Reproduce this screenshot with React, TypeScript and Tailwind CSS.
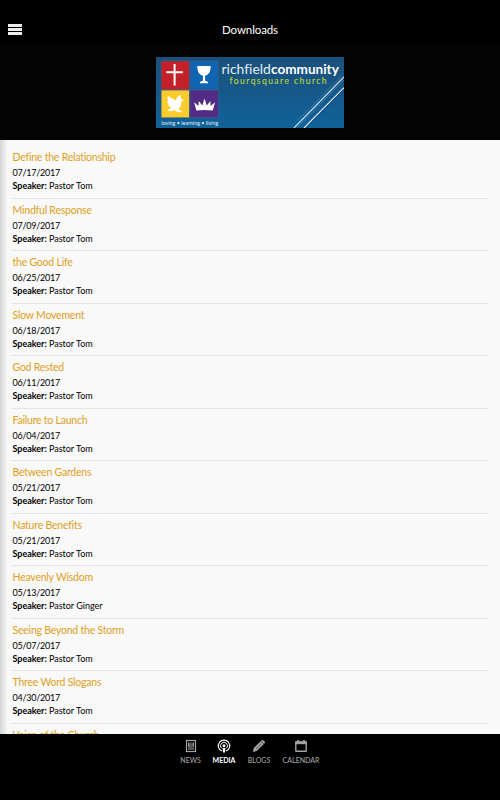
const downloads = [
  { title: "Define the Relationship", date: "07/17/2017", speaker: "Pastor Tom" },
  { title: "Mindful Response", date: "07/09/2017", speaker: "Pastor Tom" },
  { title: "the Good Life", date: "06/25/2017", speaker: "Pastor Tom" },
  { title: "Slow Movement", date: "06/18/2017", speaker: "Pastor Tom" },
  { title: "God Rested", date: "06/11/2017", speaker: "Pastor Tom" },
  { title: "Failure to Launch", date: "06/04/2017", speaker: "Pastor Tom" },
  { title: "Between Gardens", date: "05/21/2017", speaker: "Pastor Tom" },
  { title: "Nature Benefits", date: "05/21/2017", speaker: "Pastor Tom" },
  { title: "Heavenly Wisdom", date: "05/13/2017", speaker: "Pastor Ginger" },
  { title: "Seeing Beyond the Storm", date: "05/07/2017", speaker: "Pastor Tom" },
  { title: "Three Word Slogans", date: "04/30/2017", speaker: "Pastor Tom" },
];

function ChurchLogo() {
  return (
    <svg width="188" height="71" viewBox="0 0 188 71" className="block">
      <defs>
        <linearGradient id="sky" x1="0" y1="0" x2="0" y2="1">
          <stop offset="0" stopColor="#1a5079" />
          <stop offset="1" stopColor="#10629b" />
        </linearGradient>
      </defs>
      <rect width="188" height="71" fill="url(#sky)" />

      <rect x="4.8" y="3.6" width="57.8" height="57.4" fill="#3a5f86" />
      <rect x="5.5" y="4.3" width="27.5" height="28" fill="#c4202a" />
      <rect x="34.4" y="4.3" width="27.6" height="28" fill="#0f65b0" />
      <rect x="5.5" y="33.4" width="27.5" height="27" fill="#fdcb2c" />
      <rect x="34.4" y="33.4" width="27.6" height="27" fill="#532b85" />

      {/* cross */}
      <path d="M18.6 7V28.400M10.3 15.300H26.8" stroke="#fff" strokeWidth="2" fill="none" />
      {/* cup */}
      <path d="M41.3 9h13.400c.1 5-1.700 8.800-5.700 9.700v4.800l3 1.500v1.300h-8v-1.300l3-1.500v-4.800c-4-.9-5.800-4.700-5.700-9.700z" fill="#fff" />
      {/* dove */}
      <path d="M12 38.500C13.500 41 17 41.500 20 43.500C20.500 40.500 22.300 38.300 25 38C24.300 39.500 24.500 40.800 25.200 42L28 43.200L25.300 44.500C25.500 48.500 24 51 22.300 52L26.500 54.700C23 56 20 54.500 18 53C16 54.500 13.500 54.600 11.300 53.300L15.500 50.700C13.500 50 12.300 48.800 11.800 47.500L13.300 47.500C11.800 46.500 11.200 45.200 11.200 44L12.500 44.200C11.300 42.500 11.200 40.300 12 38.500Z" fill="#fff" />
      {/* crown */}
      <path d="M40.400 53.600 38 45.200l4.500 3.900.2-5 3.600 4.400 2.200-7 2.300 7 3.600-4.400.2 5 4.500-3.900-2.400 8.400q-8.100-1.200-16.300 0z" fill="#fff" />

      <g fill="none">
        <path d="M188 19.800 138 71" stroke="#c7dcea" strokeWidth="1.200" />
        <path d="M188 30.700 148 71" stroke="#dce8f1" strokeWidth="1.200" />
        <path d="M186 18.500 142 63.500M188 22.800 142 70" stroke="#9ec3dc" strokeWidth=".5" opacity=".5" />
        <path d="M188 32.200 150 71" stroke="#183a8a" strokeWidth="1" />
      </g>

      <g fontFamily="Lato, sans-serif" style={{ fontVariantLigatures: "none" }}>
        <text x="65.500" y="17.300" fontSize="14" fill="#e4edf3" textLength="49.300" lengthAdjust="spacingAndGlyphs">richfield</text>
        <text x="115" y="17.300" fontSize="14" fontWeight="700" fill="#fff" textLength="67.800" lengthAdjust="spacingAndGlyphs">community</text>
        <text x="73.500" y="27" fontSize="8.500" fill="#b9cf3d" stroke="#b9cf3d" strokeWidth=".15" textLength="97">fourqsquare church</text>
        <text x="5.200" y="68" fontSize="6" fill="#e4edf3" textLength="57" lengthAdjust="spacingAndGlyphs">loving • learning •  living</text>
      </g>
    </svg>
  );
}

function NewsIcon() {
  return (
    <svg width="12" height="14" viewBox="0 0 12 14" fill="none" stroke="#a3a3a3">
      <rect x="1.500" y="1.500" width="9" height="11" strokeWidth="1.200" />
      <path d="M3.500 3.500v3.500h1.500V3.500M7 3.500v3.500M8.500 3.500v3.500" strokeWidth="1" />
      <path d="M3 8h6M3 10h6" strokeWidth="1.200" />
    </svg>
  );
}

function MediaIcon() {
  return (
    <svg width="14" height="14" viewBox="0 0 14 14" fill="none" stroke="#fff">
      <path d="M4.800 12.100a5.700 5.700 0 1 1 4.400 0" strokeWidth="1.100" />
      <path d="M4.500 9.300a3.500 3.500 0 1 1 5 0" strokeWidth="1" />
      <circle cx="7" cy="6.800" r="1.500" fill="#fff" stroke="none" />
      <path d="M5.500 8.900h3L8 13.600H6z" fill="#fff" stroke="none" />
    </svg>
  );
}

function PencilIcon() {
  return (
    <svg width="14" height="14" viewBox="0 0 14 14" fill="none" stroke="#a3a3a3">
      <path d="m.8 13 1-4 8.200-7.900c.9-.8 3.700 1.900 2.900 2.900l-8.200 8z" fill="#a3a3a3" stroke="none" />
      <path d="m4 9.900 5.400-5.300" stroke="#333" strokeWidth=".7" />
      <path d="m9 2.200 3 3" stroke="#222" strokeWidth=".6" />
    </svg>
  );
}

function CalendarIcon() {
  return (
    <svg width="12" height="14" viewBox="0 0 12 14" fill="none" stroke="#a3a3a3">
      <rect x=".8" y="3" width="10.400" height="9.300" rx=".5" strokeWidth="1.400" />
      <path d="M.2 3.800h11.600" strokeWidth="2.800" />
      <path d="M3 1v2.500M9 1v2.500" strokeWidth="1.600" />
    </svg>
  );
}

const tabs = [
  { label: "NEWS", icon: <NewsIcon />, width: "w-[20px]" },
  { label: "MEDIA", icon: <MediaIcon />, width: "w-[23px]", active: true },
  { label: "BLOGS", icon: <PencilIcon />, width: "w-[23px]" },
  { label: "CALENDAR", icon: <CalendarIcon />, width: "w-[37px]" },
];

export default function App() {
  return (
    <div className="flex flex-col w-[500px] h-[800px] overflow-hidden bg-black font-['Lato',sans-serif] [font-variant-ligatures:none]">
      <header className="relative shrink-0 h-[45px] flex items-end justify-center">
        <button className="absolute left-2 top-6 flex flex-col gap-px">
          <span className="block w-[14px] h-[3px] bg-[#ededed]" />
          <span className="block w-[14px] h-[3px] bg-[#ededed]" />
          <span className="block w-[14px] h-[3px] bg-[#ededed]" />
        </button>
        <h1 className="text-[11.500px] leading-[15px] mb-2 tracking-[-0.100px] text-white">Downloads</h1>
      </header>

      <div className="shrink-0 h-[95px] bg-[#040404] flex justify-center pt-3">
        <ChurchLogo />
      </div>

      <main className="relative flex-1 min-h-0 overflow-hidden bg-[#f9f9f9] px-3 pt-[6px]">
        <div className="absolute inset-y-0 left-0 w-2 bg-gradient-to-r from-[#d4d4d4] to-[#f9f9f9]" />
        <ul>
          {downloads.map((item) => (
            <li key={item.title} className="h-[52.500px] border-b border-[#e4e4e4] pt-1 pl-[0.500px] text-[9px] text-black">
              <h2 className="text-[10.500px] leading-[14px] tracking-[-0.220px] text-[#e0a01b]">{item.title}</h2>
              <p className="leading-[13px] mt-[2px] tracking-[-0.250px]">{item.date}</p>
              <p className="leading-[13px] tracking-[-0.020px]">
                <b>Speaker:</b> {item.speaker}
              </p>
            </li>
          ))}
          <li className="pt-1 pl-[0.500px]">
            <h2 className="text-[10.500px] leading-[14px] tracking-[-0.220px] text-[#e0a01b]">Voice of the Church</h2>
          </li>
        </ul>
      </main>

      <nav className="shrink-0 h-[66px] bg-black flex justify-center gap-3 pt-[5px]">
        {tabs.map((tab) => (
          <div key={tab.label} className={`${tab.width} flex flex-col items-center`}>
            {tab.icon}
            <span className={`mt-[3px] text-[7px] leading-[9px] ${tab.active ? "font-bold text-white" : "font-medium text-[#a3a3a3]"}`}>
              {tab.label}
            </span>
          </div>
        ))}
      </nav>
    </div>
  );
}
